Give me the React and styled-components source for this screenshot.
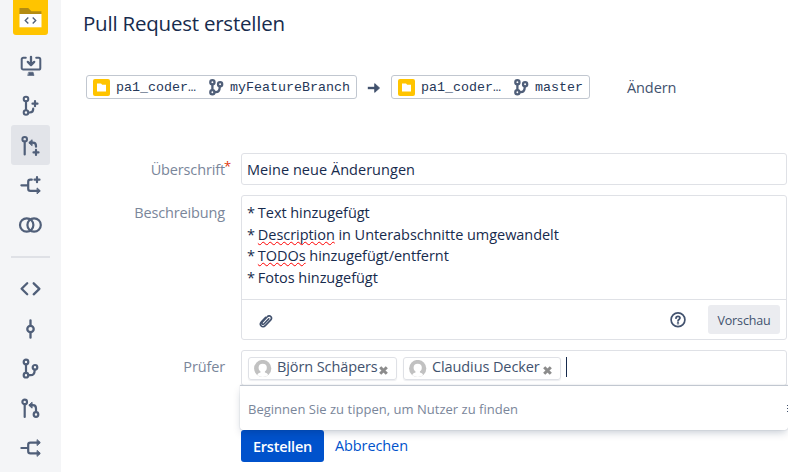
import React from "react";
import styled, { createGlobalStyle, css } from "styled-components";

const Global = createGlobalStyle`
  *, *::before, *::after { box-sizing: border-box; }
  body { margin: 0; background: #fff; overflow: hidden; }
  body, button, input { font-family: "Open Sans", "Noto Sans", sans-serif; }
`;

const Page = styled.div`
  display: flex;
  width: 788px;
  height: 472px;
  overflow: hidden;
  color: #172b4d;
  font-size: 14.5px;
`;

const Sidebar = styled.nav`
  flex: 0 0 61px;
  display: flex;
  flex-direction: column;
  padding-left: 11px;
  background: #f4f5f7;
`;

const ProjectLogo = styled.div`
  width: 35px;
  height: 35px;
  margin: 0 0 10px 2px;
  border-radius: 0 0 3px 3px;
  background: #ffc400;
  svg { display: block; }
`;

const NavItem = styled.a`
  flex: none;
  width: 39px;
  height: 40px;
  padding: 8px;
  border-radius: 3px;
  color: #505f79;
  background: ${(p) => (p.$active ? "#e2e4e9" : "transparent")};
`;

const NavDivider = styled.hr`
  flex: none;
  width: 39px;
  height: 2px;
  margin: 11px 0;
  border: 0;
  background: #dfe1e6;
`;

const Glyph = styled.svg`
  display: block;
  flex: none;
  overflow: visible;
  fill: none;
  stroke: currentColor;
  stroke-width: ${(p) => p.$weight || 2};
  stroke-linecap: round;
  stroke-linejoin: round;
`;

const Main = styled.main`
  flex: 1;
  min-width: 0;
  padding-left: 22px;
`;

const Title = styled.h1`
  height: 75px;
  margin: 0;
  padding-top: 9px;
  font-size: 20.5px;
  font-weight: 400;
  line-height: 28px;
  letter-spacing: -0.22px;
`;

const CompareRow = styled.div`
  display: flex;
  align-items: center;
  height: 24px;
  margin-left: 3px;
`;

const BranchBox = styled.div`
  display: flex;
  align-items: center;
  width: ${(p) => p.$width}px;
  height: 24px;
  padding-left: 6px;
  border: 1px solid #c1c7d0;
  border-radius: 3px;
  font: 13.33px/20px "Liberation Mono", monospace;
  color: #253858;
  white-space: nowrap;
`;

const RepoName = styled.span`
  flex: none;
  width: 99px;
  padding: 2px 0 0 6px;
`;

const BranchName = styled.span`
  padding: 2px 0 0 7px;
`;

const RowArrow = styled.span`
  width: 34px;
  padding: 1px 0 0 10px;
  color: #42526e;
`;

const ChangeLink = styled.a`
  margin-left: 37px;
  padding-top: 2px;
  line-height: 22px;
  letter-spacing: -0.1px;
  color: #42526e;
`;

const Form = styled.form`
  display: grid;
  grid-template-columns: 142px 546px;
  column-gap: 16px;
  margin-top: 54px;
`;

const Label = styled.label`
  position: relative;
  padding-top: ${(p) => p.$top || 6}px;
  color: #7a869a;
  line-height: 22px;
  letter-spacing: -0.14px;
  text-align: right;
`;

const Required = styled.span`
  position: absolute;
  top: 2px;
  right: -6px;
  color: #de350b;
  font-size: 13px;
  line-height: 22px;
`;

const fieldBox = css`
  border: 1px solid #dfe1e6;
  border-radius: 3px;
  background: #fff;
`;

const TitleInput = styled.input`
  ${fieldBox}
  height: 32px;
  margin-bottom: 10px;
  padding: 0 6px 0 5px;
  color: #172b4d;
  font-size: 14.5px;
  letter-spacing: 0.04px;
  outline: 0;
`;

const Editor = styled.div`
  ${fieldBox}
  height: 145px;
  margin-bottom: 10px;
`;

const EditorText = styled.div`
  height: 104px;
  padding: 6px 5px;
  border-bottom: 1px solid #dfe1e6;
  line-height: 21.5px;
  letter-spacing: -0.05px;
`;

const Bullet = styled.span`
  margin-right: -0.8px;
`;

const Misspelled = styled.span`
  text-decoration: underline wavy #f00 1px;
  text-decoration-skip-ink: none;
  text-underline-offset: 1px;
`;

const EditorToolbar = styled.div`
  display: flex;
  align-items: center;
  height: 39px;
  padding: 0 6px 0 17px;
  color: #42526e;
`;

const ClipIcon = styled(Glyph)`
  margin-top: 2px;
`;

const HelpIcon = styled(Glyph)`
  margin-left: auto;
`;

const PreviewButton = styled.button`
  width: 72px;
  height: 29px;
  margin-left: 22px;
  padding: 2px 0 0;
  border: 0;
  border-radius: 3px;
  background: #ebecf0;
  color: #42526e;
  font-size: 12.5px;
  letter-spacing: -0.15px;
`;

const ReviewerField = styled.div`
  position: relative;
`;

const ReviewerBox = styled.div`
  ${fieldBox}
  display: flex;
  gap: 6px;
  height: 36px;
  padding: 6px;
`;

const ReviewerChip = styled.span`
  display: flex;
  align-items: center;
  width: ${(p) => p.$width}px;
  height: 23px;
  padding-left: 5px;
  border: 1px solid #dfe1e6;
  border-radius: 3px;
  box-shadow: 0 1px 1px rgba(9, 30, 66, 0.08);
  color: #42526e;
  line-height: 20px;
  letter-spacing: -0.1px;
  white-space: nowrap;
`;

const ReviewerName = styled.span`
  width: ${(p) => p.$width}px;
  margin: -3px 2px 0 5px;
`;

const RemoveMark = styled(Glyph)`
  margin-top: 3px;
  color: #8c8c8c;
`;

const Caret = styled.span`
  width: 1px;
  height: 20px;
  margin-left: -1px;
  background: #172b4d;
`;

const Suggestions = styled.div`
  position: absolute;
  z-index: 1;
  top: 35px;
  left: -1px;
  width: 548px;
  height: 45px;
  padding: 12px 8px;
  border-top: 1px solid #c1c7d0;
  border-radius: 0 0 3px 3px;
  background: #fff;
  box-shadow: 0 4px 8px -2px rgba(9, 30, 66, 0.25), 0 0 1px rgba(9, 30, 66, 0.35);
  color: #7a869a;
  font-size: 13px;
  line-height: 22px;
  letter-spacing: 0.02px;
`;

const OverflowMark = styled.span`
  position: absolute;
  z-index: 2;
  top: 55px;
  right: -1px;
  width: 1px;
  height: 7px;
  background: repeating-linear-gradient(#42526e 0 1px, #fff 1px 3px);
`;

const Actions = styled.div`
  grid-column: 2;
  display: flex;
  align-items: center;
  gap: 11px;
  margin-top: 44px;
`;

const CreateButton = styled.button`
  width: 83px;
  height: 32px;
  padding: 0;
  border: 0;
  border-radius: 3px;
  background: #0052cc;
  color: #fff;
  font-size: 14.5px;
  font-weight: 600;
  letter-spacing: -0.24px;
`;

const CancelLink = styled.a`
  color: #0052cc;
  line-height: 22px;
  letter-spacing: -0.1px;
`;

const Icon = ({ children, weight }) => (
  <Glyph width="24" height="24" viewBox="0 0 24 24" $weight={weight}>{children}</Glyph>
);

const CloneIcon = () => (
  <Icon>
    <path d="M6.8 4.8H4.3a1.6 1.6 0 0 0-1.6 1.6V15a1.6 1.6 0 0 0 1.6 1.6h15.4a1.6 1.6 0 0 0 1.6-1.600V6.400a1.600 1.600 0 0 0-1.600-1.600h-2.500" />
    <path d="M12 3.800v7.800M8.800 8.900 12 12.100l3.200-3.200" strokeWidth="2.300" />
    <path d="M9.900 19.200h4.200l.9 3.300H9z" fill="currentColor" strokeWidth=".6" />
  </Icon>
);
const BranchAddIcon = () => (
  <Icon>
    <circle cx="7" cy="6" r="2.3" /><circle cx="7" cy="19.5" r="2.3" />
    <path d="M7 8.4v8.7M9.6 19.5h1.2c2.4 0 3.4-1.2 3.4-3.500v-.3M16 8.200v5M13.500 10.700h5" strokeWidth="2.200" />
  </Icon>
);
const PullAddIcon = () => (
  <Icon>
    <circle cx="5.7" cy="6.2" r="2.3" />
    <path d="M5.7 8.700V21.500M11.200 9.700h2.600c2.100 0 3.200 1.100 3.200 3.200v.8M17 16.900v5M14.500 19.400h5" strokeWidth="2.200" />
    <path d="m12.800 7-3 2.700 3 2.700z" fill="currentColor" strokeWidth="1" />
  </Icon>
);
const ForkAddIcon = () => (
  <Icon>
    <path d="M2.400 12.300h6.800M12.800 6.700h-1.400q-2.200 0-2.200 2.200v6.800q0 2.200 2.200 2.200h8.400M18 4.200v5M15.500 6.700h5" strokeWidth="2.200" />
    <path d="m18.400 15.200 2.900 2.700-2.900 2.700z" fill="currentColor" strokeWidth="1" />
  </Icon>
);
const CompareIcon = () => (
  <Icon weight={2.2}><circle cx="7.7" cy="12" r="6.7" /><circle cx="15.1" cy="12" r="6.7" /></Icon>
);
const CodeIcon = () => (
  <Icon weight={2.3}><path d="m8.200 6.300-5.600 5.500 5.600 5.500M14.700 6.300l5.700 5.500-5.700 5.500" /></Icon>
);
const CommitIcon = () => (
  <Icon weight={2.3}><circle cx="11.5" cy="12" r="3.2" /><path d="M11.500 3.300v5.200M11.500 15.500v5.200" /></Icon>
);
const BranchesIcon = () => (
  <Icon weight={2.2}>
    <circle cx="7" cy="5" r="2.3" /><circle cx="7" cy="18.2" r="2.3" /><circle cx="16" cy="10.3" r="2.3" />
    <path d="M7 7.400v8.400M9.500 18.200h2c3.200 0 4.200-1.800 4.200-5.300" />
  </Icon>
);
const PullIcon = () => (
  <Icon weight={2.2}>
    <circle cx="5.7" cy="4.9" r="2.3" /><circle cx="17" cy="17.5" r="2.3" />
    <path d="M5.700 7.400v12.600M11.200 8.200h2.600c2.100 0 3.200 1.100 3.200 3.200v3.500" />
    <path d="m12.800 5.500-3 2.700 3 2.700z" fill="currentColor" strokeWidth="1" />
  </Icon>
);
const ForkIcon = () => (
  <Icon weight={2.2}>
    <path d="M2.400 11h6.800M19.800 5.600h-8.400q-2.200 0-2.200 2.200v6.400q0 2.200 2.200 2.200h8.400" />
    <path d="m18.400 2.900 2.900 2.700-2.900 2.700zM18.400 13.700l2.900 2.700-2.900 2.700z" fill="currentColor" strokeWidth="1" />
  </Icon>
);

const RepoAvatar = () => (
  <svg width="17" height="17" viewBox="0 0 17 17">
    <rect width="17" height="17" rx="2" fill="#ffc400" />
    <path d="M4 4.500h4l1.200 1.200H13V12.500H4z" fill="#fff" />
  </svg>
);
const SmallBranchIcon = () => (
  <Glyph width="14" height="18" viewBox="0 0 14 18" color="#505f79" $weight={2.3}>
    <circle cx="3.4" cy="4.2" r="2.1" /><circle cx="3.4" cy="14.2" r="2.1" /><circle cx="11.1" cy="6.2" r="2.1" />
    <path d="M3.400 6.400v5.400M5.600 14.200h1.200c3 0 3.900-1.600 4-5.500" />
  </Glyph>
);
const PersonAvatar = () => (
  <svg width="18" height="18" viewBox="0 0 18 18">
    <clipPath id="avatar"><circle cx="8.7" cy="8.5" r="8.6" /></clipPath>
    <g clipPath="url(#avatar)">
      <path d="M0 0h18v18H0z" fill="#c1c1c1" />
      <circle cx="8.7" cy="7.8" r="4.1" fill="#fff" />
      <path d="M6.500 10h4.400v2.500c2.400.4 3.600 1.600 3.600 5.500H2.900c0-3.900 1.200-5.100 3.600-5.500z" fill="#fff" />
    </g>
  </svg>
);

const Source = ({ branch, width }) => (
  <BranchBox $width={width}>
    <RepoAvatar />
    <RepoName>pa1_coder…</RepoName>
    <SmallBranchIcon />
    <BranchName>{branch}</BranchName>
  </BranchBox>
);

const Reviewer = ({ name, width, nameWidth }) => (
  <ReviewerChip $width={width}>
    <PersonAvatar />
    <ReviewerName $width={nameWidth}>{name}</ReviewerName>
    <RemoveMark width="9" height="9" viewBox="0 0 9 9" $weight={3}>
      <path d="m1.200 1.200 6.600 6.600M7.800 1.200 1.200 7.800" strokeLinecap="butt" />
    </RemoveMark>
  </ReviewerChip>
);

export default function App() {
  return (
    <Page>
      <Global />
      <Sidebar>
        <ProjectLogo>
          <svg width="35" height="35" viewBox="0 0 35 35">
            <path d="M6.500 8h8.700l3.200 3.200h10V14h-22z" fill="#b38b12" />
            <path d="M6.500 14h22v13.300h-22z" fill="#fff" />
            <path d="m15.300 17.500-3 3 3 3M19.700 17.500l3 3-3 3" fill="none" stroke="#505f79" strokeWidth="1.4" />
          </svg>
        </ProjectLogo>
        <NavItem><CloneIcon /></NavItem>
        <NavItem><BranchAddIcon /></NavItem>
        <NavItem $active><PullAddIcon /></NavItem>
        <NavItem><ForkAddIcon /></NavItem>
        <NavItem><CompareIcon /></NavItem>
        <NavDivider />
        <NavItem><CodeIcon /></NavItem>
        <NavItem><CommitIcon /></NavItem>
        <NavItem><BranchesIcon /></NavItem>
        <NavItem><PullIcon /></NavItem>
        <NavItem><ForkIcon /></NavItem>
      </Sidebar>
      <Main>
        <Title>Pull Request erstellen</Title>
        <CompareRow>
          <Source branch="myFeatureBranch" width={271} />
          <RowArrow>
            <Glyph width="14" height="12" viewBox="0 0 14 12" $weight={2.4}>
              <path d="M.8 6h9.500" strokeLinecap="butt" />
              <path d="m8 1.900 4.500 4.100-4.500 4.100z" fill="currentColor" strokeWidth="1" />
            </Glyph>
          </RowArrow>
          <Source branch="master" width={199} />
          <ChangeLink>Ändern</ChangeLink>
        </CompareRow>
        <Form>
          <Label>Überschrift<Required>*</Required></Label>
          <TitleInput defaultValue="Meine neue Änderungen" />
          <Label $top={7}>Beschreibung</Label>
          <Editor>
            <EditorText>
              <div><Bullet>*</Bullet> Text hinzugefügt</div>
              <div><Bullet>*</Bullet> <Misspelled>Description</Misspelled> in Unterabschnitte umgewandelt</div>
              <div><Bullet>*</Bullet> <Misspelled>TODOs</Misspelled> hinzugefügt/entfernt</div>
              <div><Bullet>*</Bullet> Fotos hinzugefügt</div>
            </EditorText>
            <EditorToolbar>
              <ClipIcon width="14" height="16" viewBox="0 0 14 16" $weight={1.6}>
                <path d="m9.800 5.900-4.600 4.800c-.6.7-1.600.7-2 .2-.5-.5-.4-1.300.2-2l4.900-5.100c1-1.100 2.600-1.200 3.500-.3s.8 2.500-.2 3.600l-5.300 5.500c-1.200 1.300-3 1.500-4.100.4s-1-2.900.2-4.200l4.300-4.500" />
              </ClipIcon>
              <HelpIcon width="16" height="16" viewBox="0 0 16 16" $weight={1.7}>
                <circle cx="8" cy="7.7" r="6.9" />
                <path d="M6 6.200c0-1.200.9-1.900 2-1.900s2 .7 2 1.800c0 1.300-2 1.500-2 2.900" />
                <circle cx="8" cy="11.200" r=".35" />
              </HelpIcon>
              <PreviewButton type="button">Vorschau</PreviewButton>
            </EditorToolbar>
          </Editor>
          <Label>Prüfer</Label>
          <ReviewerField>
            <ReviewerBox>
              <Reviewer name="Björn Schäpers" width={149} nameWidth={100} />
              <Reviewer name="Claudius Decker" width={158} nameWidth={109} />
              <Caret />
            </ReviewerBox>
            <Suggestions>Beginnen Sie zu tippen, um Nutzer zu finden</Suggestions>
            <OverflowMark />
          </ReviewerField>
          <Actions>
            <CreateButton type="button">Erstellen</CreateButton>
            <CancelLink>Abbrechen</CancelLink>
          </Actions>
        </Form>
      </Main>
    </Page>
  );
}
